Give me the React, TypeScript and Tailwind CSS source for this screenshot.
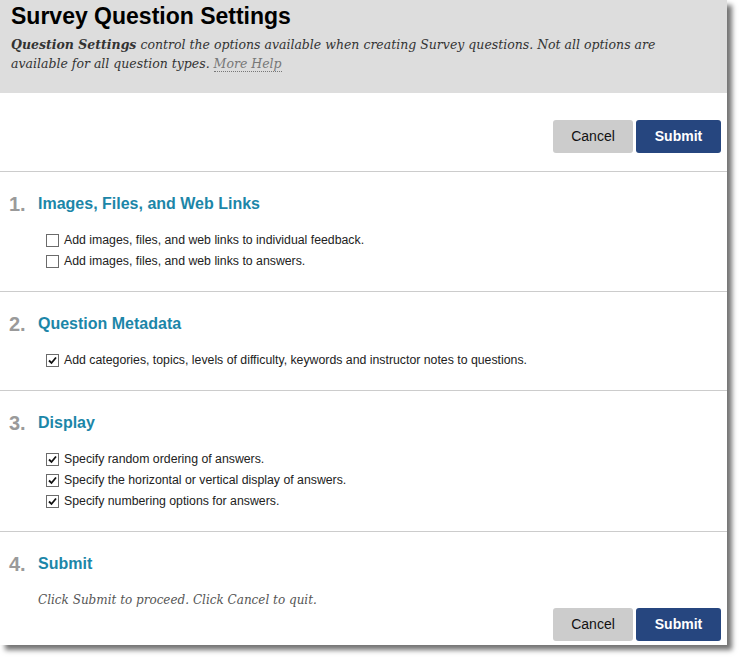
import React from 'react';

const sans = { fontFamily: '"Liberation Sans", Arial, sans-serif' };
const serif = { fontFamily: '"DejaVu Serif", Georgia, serif' };

interface Option {
  label: string;
  checked: boolean;
}

interface Section {
  num: string;
  title: string;
  options: Option[];
}

const sections: Section[] = [
  {
    num: '1.',
    title: 'Images, Files, and Web Links',
    options: [
      { label: 'Add images, files, and web links to individual feedback.', checked: false },
      { label: 'Add images, files, and web links to answers.', checked: false },
    ],
  },
  {
    num: '2.',
    title: 'Question Metadata',
    options: [
      { label: 'Add categories, topics, levels of difficulty, keywords and instructor notes to questions.', checked: true },
    ],
  },
  {
    num: '3.',
    title: 'Display',
    options: [
      { label: 'Specify random ordering of answers.', checked: true },
      { label: 'Specify the horizontal or vertical display of answers.', checked: true },
      { label: 'Specify numbering options for answers.', checked: true },
    ],
  },
];

function Checkbox({ checked }: { checked: boolean }) {
  return (
    <span className="w-[13px] h-[13px] border border-[#6b6b6b] bg-white flex items-center justify-center flex-shrink-0">
      {checked && (
        <svg width="9" height="9" viewBox="0 0 9 9">
          <path d="M1 4.5 L3.5 7 L8 1.5" fill="none" stroke="#111" strokeWidth="1.8" />
        </svg>
      )}
    </span>
  );
}

function Buttons() {
  return (
    <div className="flex gap-[3px]">
      <button className="w-[80px] h-[33px] rounded-[3px] bg-[#cccccc] text-[14px] text-[#111]">Cancel</button>
      <button className="w-[85px] h-[33px] rounded-[3px] bg-[#26467f] text-[14px] font-bold text-white">Submit</button>
    </div>
  );
}

function Heading({ num, title }: { num: string; title: string }) {
  return (
    <div className="flex items-center h-[24px] pl-[9px]">
      <span className="w-[29px] text-[20px] font-bold text-[#9a9a9a]">{num}</span>
      <span className="text-[16px] font-bold text-[#1c86a8]">{title}</span>
    </div>
  );
}

export default function App() {
  return (
    <div className="bg-white w-[742px] h-[660px]" style={sans}>
      <div className="w-[727px] bg-white shadow-[5px_5px_5px_rgba(0,0,0,0.55)]">
        <div className="h-[93px] bg-[#dddddd] px-[11px] pt-[1px]">
          <h1 className="text-[23px] font-bold text-black leading-[30px]">Survey Question Settings</h1>
          <p className="mt-[4px] text-[12.5px] italic text-[#333] leading-[19px]" style={serif}>
            <b>Question Settings</b> control the options available when creating Survey questions. Not all options are
            <br />
            available for all question types.{' '}
            <span className="text-[#777] border-b border-dotted border-[#777]">More Help</span>
          </p>
        </div>

        <div className="flex justify-end pt-[27px] pb-[18px] pr-[6px] border-b border-[#cccccc]">
          <Buttons />
        </div>

        {sections.map((s) => (
          <div key={s.num} className="border-b border-[#cccccc] pt-[20px] pb-[19px]">
            <Heading num={s.num} title={s.title} />
            <div className="mt-[14px] pl-[46px]">
              {s.options.map((o) => (
                <div key={o.label} className="flex items-center gap-[5px] h-[21px] text-[12.3px] text-[#222]">
                  <Checkbox checked={o.checked} />
                  <span>{o.label}</span>
                </div>
              ))}
            </div>
          </div>
        ))}

        <div className="pt-[20px] pb-[4px]">
          <Heading num="4." title="Submit" />
          <div className="flex justify-between pr-[6px]">
            <p className="pl-[38px] mt-[15px] text-[12px] italic text-[#555] leading-[19px]" style={serif}>
              Click Submit to proceed. Click Cancel to quit.
            </p>
            <div className="mt-[32px]">
              <Buttons />
            </div>
          </div>
        </div>
      </div>
    </div>
  );
}
